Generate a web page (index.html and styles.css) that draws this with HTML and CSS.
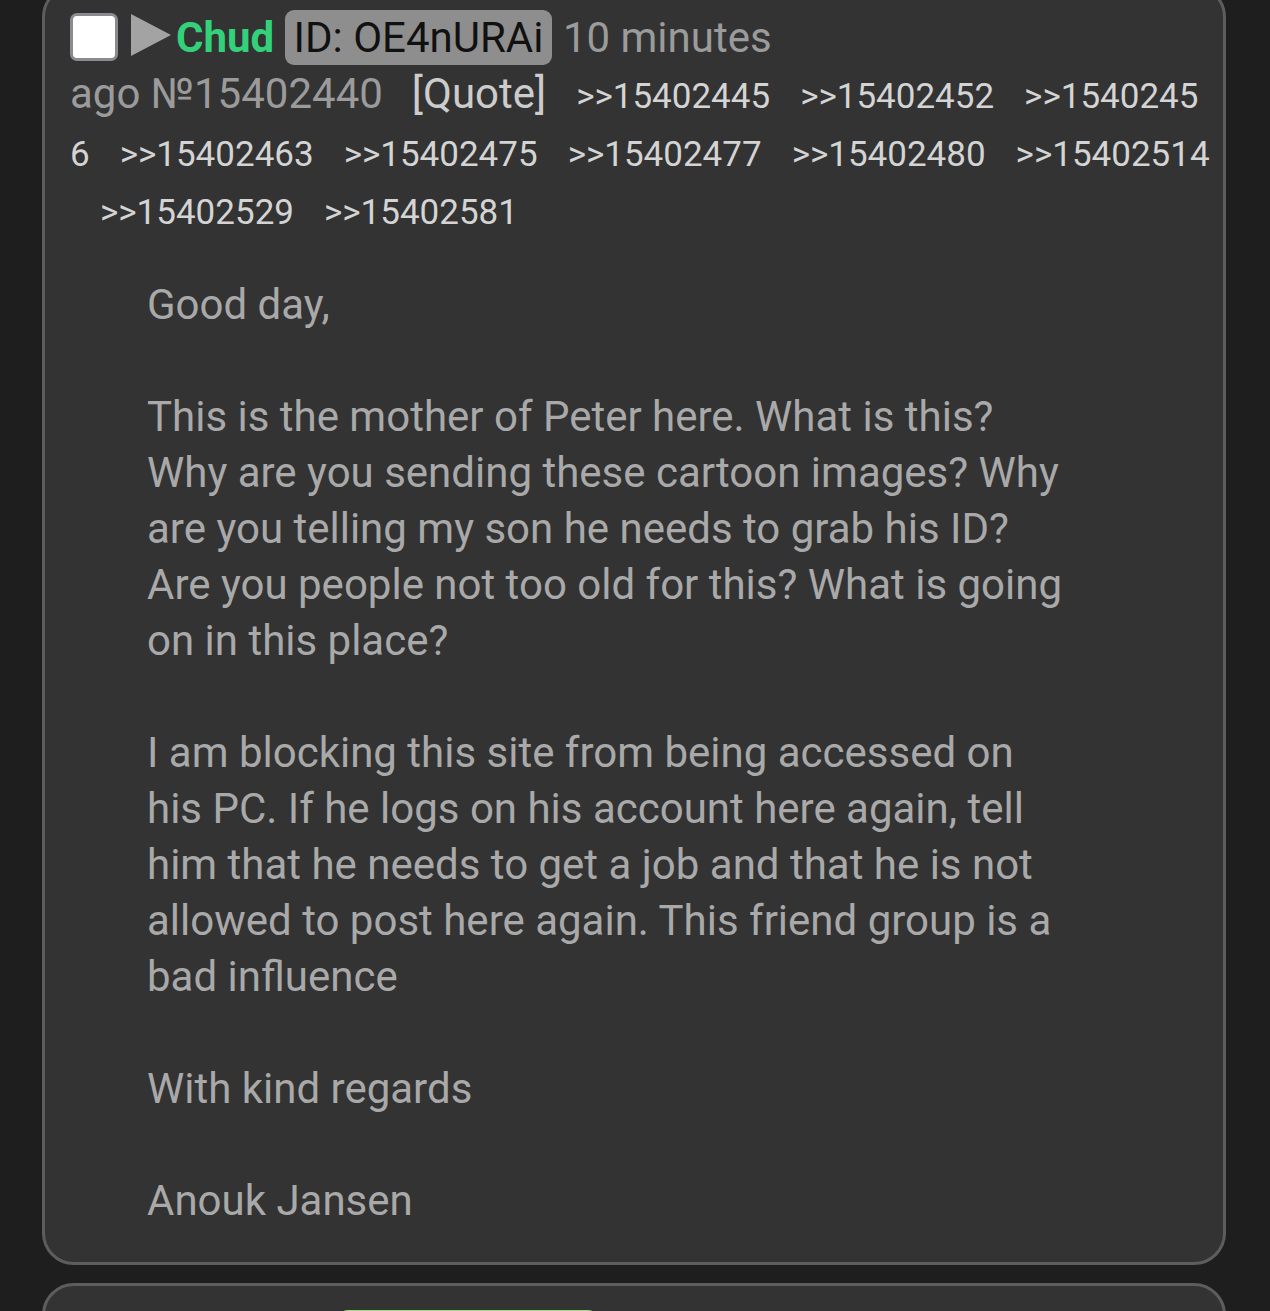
FILE: index.html
```html
<!DOCTYPE html>
<html>
<head>
<meta charset="utf-8">
<link rel="stylesheet" href="styles.css">
</head>
<body>
<div class="thread">
  <div class="post">
    <div class="post-info"><span class="checkbox"></span><svg class="arrow" width="40" height="42" viewBox="0 0 40 42"><polygon points="0,0 40,21 0,42" fill="#a3a3a3"/></svg><span class="name">Chud</span> <span class="poster-id">ID: OE4nURAi</span> <span class="date">10 minutes <span class="nowrap">ago <span class="post-no">№15402440</span><span class="quote-btn">[Quote]</span></span></span><span class="backlink">&gt;&gt;15402445</span><span class="backlink">&gt;&gt;15402452</span><span class="backlink">&gt;&gt;15402456</span><span class="backlink">&gt;&gt;15402463</span><span class="backlink">&gt;&gt;15402475</span><span class="backlink">&gt;&gt;15402477</span><span class="backlink">&gt;&gt;15402480</span><span class="backlink">&gt;&gt;15402514</span><span class="backlink">&gt;&gt;15402529</span><span class="backlink">&gt;&gt;15402581</span></div>
    <blockquote class="post-message">Good day,<br><br>This is the mother of Peter here. What is this? Why are you sending these cartoon images? Why are you telling my son he needs to grab his ID? Are you people not too old for this? What is going on in this place?<br><br>I am blocking this site from being accessed on his PC. If he logs on his account here again, tell him that he needs to get a job and that he is not allowed to post here again. This friend group is a bad influence<br><br>With kind regards<br><br>Anouk Jansen</blockquote>
  </div>
  <div class="post">
    <div class="post-info"><span class="next-badge"></span></div>
  </div>
</div>
</body>
</html>
```

FILE: styles.css
```css
html, body {
  margin: 0;
  padding: 0;
  background: #1e1e1e;
}
body {
  font-family: Roboto, "Noto Sans", sans-serif;
  overflow: hidden;
  height: 1311px;
}
.thread {
  display: flex;
  flex-direction: column;
  gap: 18px;
  padding: 0 44px 0 42px;
  margin-top: -15px;
}
.post {
  background: #333333;
  border: 3px solid #5d5d5d;
  border-radius: 32px;
  padding: 22px 11px 33px 25px;
}
.post-info {
  font-size: 42px;
  line-height: 56px;
  color: #9b9b9b;
  word-break: break-all;
}
.checkbox {
  display: inline-block;
  width: 42px;
  height: 42px;
  background: #ffffff;
  border: 3px solid #8b8a8f;
  border-radius: 7px;
  vertical-align: -9px;
  margin-right: 13px;
}
.arrow {
  vertical-align: -4px;
  margin-right: 5px;
}
.name {
  color: #33d17a;
  font-weight: bold;
}
.poster-id {
  display: inline-block;
  background: #8e8e8e;
  color: #111111;
  line-height: 55px;
  padding: 0 9px;
  border-radius: 9px;
  word-break: normal;
}
.nowrap {
  white-space: nowrap;
}
.post-no {
  margin-right: 29px;
}
.quote-btn {
  color: #cccccc;
}
.backlink {
  color: #d4d4d4;
  font-size: 35px;
  line-height: 54px;
  padding-left: 30px;
}
.post-message {
  margin: 37px 137px 0 77px;
  font-size: 42px;
  line-height: 56px;
  color: #a9a9a9;
}
.next-badge {
  display: inline-block;
  width: 260px;
  height: 40px;
  background: #a6d783;
  border-radius: 10px;
  margin-left: 268px;
}
```
